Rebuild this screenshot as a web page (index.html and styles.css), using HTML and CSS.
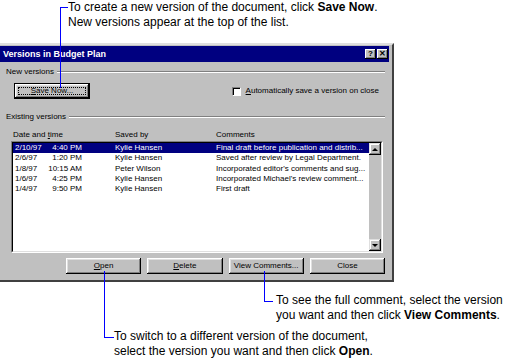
FILE: index.html
```html
<!DOCTYPE html>
<html lang="en">
<head>
    <meta charset="UTF-8">
    <title>Versions in Budget Plan</title>
    <link rel="stylesheet" href="styles.css">
</head>
<body>
    <p class="callout callout-top">To create a new version of the document, click <b>Save Now</b>.<br>New versions appear at the top of the list.</p>

    <div class="dialog">
        <div class="titlebar">
            <span class="title">Versions in Budget Plan</span>
            <span class="tb-buttons">
                <span class="tb-btn">?</span>
                <span class="tb-btn">&#x2715;</span>
            </span>
        </div>

        <div class="dialog-body">
            <div class="group-head"><span>New versions</span><span class="etch"></span></div>
            <div class="new-row">
                <button class="btn btn-default"><span class="focus"><u>S</u>ave Now...</span></button>
                <label class="check"><span class="box"></span><span><u>A</u>utomatically save a version on close</span></label>
            </div>

            <div class="group-head"><span>Existing versions</span><span class="etch"></span></div>
            <div class="col-heads">
                <span>Date and <u>t</u>ime</span>
                <span>Saved by</span>
                <span>Comments</span>
            </div>

            <div class="listbox">
                <div class="listbox-inner">
                    <div class="rows">
                        <div class="row selected"><span>2/10/97</span><span class="time">4:40 PM</span><span></span><span>Kylie Hansen</span><span>Final draft before publication and distrib...</span></div>
                        <div class="row"><span>2/6/97</span><span class="time">1:20 PM</span><span></span><span>Kylie Hansen</span><span>Saved after review by Legal Department.</span></div>
                        <div class="row"><span>1/8/97</span><span class="time">10:15 AM</span><span></span><span>Peter Wilson</span><span>Incorporated editor's comments and sug...</span></div>
                        <div class="row"><span>1/6/97</span><span class="time">4:25 PM</span><span></span><span>Kylie Hansen</span><span>Incorporated Michael's review comment...</span></div>
                        <div class="row"><span>1/4/97</span><span class="time">9:50 PM</span><span></span><span>Kylie Hansen</span><span>First draft</span></div>
                    </div>
                    <div class="scrollbar">
                        <span class="sb-btn"><span class="arrow-up"></span></span>
                        <span class="track"></span>
                        <span class="sb-btn"><span class="arrow-down"></span></span>
                    </div>
                </div>
            </div>

            <div class="actions">
                <button class="btn"><u>O</u>pen</button>
                <button class="btn"><u>D</u>elete</button>
                <button class="btn">View Comments...</button>
                <button class="btn">Close</button>
            </div>
        </div>
    </div>

    <p class="callout callout-comments">To see the full comment, select the version<br>you want and then click <b>View Comments</b>.</p>
    <p class="callout callout-open">To switch to a different version of the document,<br>select the version you want and then click <b>Open</b>.</p>
</body>
</html>
```

FILE: styles.css
```css
body {
    margin: 0;
    background: #fff;
    font-family: 'Liberation Sans', Arial, sans-serif;
    width: 507px;
    height: 359px;
    overflow: hidden;
}

/* callouts */
.callout {
    position: relative;
    margin: 0;
    font-size: 12px;
    line-height: 15px;
    color: #000;
    white-space: nowrap;
}
.callout::before {
    content: '';
    position: absolute;
    z-index: 1;
    border: 0 solid #0000ff;
}
.callout-top {
    padding-left: 68px;
}
.callout-top::before {
    left: 60px;
    top: 7px;
    width: 7px;
    height: 80px;
    border-top-width: 1px;
    border-left-width: 1px;
}
.callout-comments {
    margin-top: 11px;
    padding-left: 276px;
}
.callout-comments::before {
    left: 264px;
    top: -22px;
    width: 8px;
    height: 30px;
    border-left-width: 1px;
    border-bottom-width: 1px;
}
.callout-open {
    margin-top: 6px;
    padding-left: 114px;
}
.callout-open::before {
    left: 104px;
    top: -58px;
    width: 9px;
    height: 66px;
    border-left-width: 1px;
    border-bottom-width: 1px;
}

/* dialog frame */
.dialog {
    box-sizing: border-box;
    width: 397px;
    margin: 13px 0 0 -3px;
    padding: 1px 3px 1px 1px;
    background: #c0c0c0;
    border: 2px solid;
    border-color: #dfdfdf #404040 #404040 #dfdfdf;
    font-size: 8px;
    line-height: 10px;
    color: #000;
}
.titlebar {
    height: 16px;
    background: #000080;
    display: flex;
    align-items: center;
    justify-content: space-between;
    padding: 0 1px 0 3px;
}
.title {
    color: #fff;
    font-weight: bold;
    font-size: 9px;
}
.tb-buttons {
    display: flex;
    gap: 1px;
}
.tb-btn {
    width: 11px;
    height: 10px;
    background: #c0c0c0;
    box-shadow: inset -1px -1px #000, inset 1px 1px #fff, inset -2px -2px #808080;
    font-size: 8px;
    font-weight: bold;
    line-height: 10px;
    text-align: center;
}

.dialog-body {
    padding: 5px 4px 5px 6px;
}
.group-head {
    display: flex;
    align-items: center;
    gap: 3px;
    height: 10px;
}
.etch {
    flex: 1;
    border-top: 1px solid #808080;
    border-bottom: 1px solid #fff;
}
.group-head + .group-head,
.new-row + .group-head {
    margin-top: 13px;
}

.new-row {
    display: flex;
    align-items: center;
    justify-content: space-between;
    margin-top: 6px;
    padding: 0 6px 0 8px;
}
.check {
    display: flex;
    align-items: center;
    gap: 5px;
}
.box {
    width: 7px;
    height: 7px;
    background: #fff;
    border: 1px solid;
    border-color: #808080 #fff #fff #808080;
    box-shadow: inset 1px 1px #000;
}

/* buttons */
.btn {
    width: 76px;
    height: 16px;
    padding: 0;
    font: inherit;
    color: #000;
    background: #c0c0c0;
    border: 0;
    box-shadow: inset -1px -1px #000, inset 1px 1px #fff, inset -2px -2px #808080, inset 2px 2px #dfdfdf;
}
.btn-default {
    border: 1px solid #000;
    height: 16px;
    display: flex;
    padding: 3px;
    box-sizing: border-box;
}
.focus {
    flex: 1;
    border: 1px dotted #000;
    display: flex;
    align-items: center;
    justify-content: center;
    line-height: 8px;
}

/* list */
.col-heads {
    display: grid;
    grid-template-columns: 102px 101px 1fr;
    margin-top: 8px;
    padding-left: 7px;
}
.listbox {
    margin: 1px 0 0 5px;
    width: 372px;
    box-sizing: border-box;
    border: 1px solid;
    border-color: #808080 #fff #fff #808080;
}
.listbox-inner {
    display: flex;
    height: 108px;
    background: #fff;
    border: 1px solid;
    border-color: #000 #dfdfdf #dfdfdf #000;
}
.rows {
    flex: 1;
}
.row {
    display: grid;
    grid-template-columns: 32px 35px 33px 101px 1fr;
    padding-left: 2px;
    height: 10.25px;
    line-height: 10.25px;
    white-space: nowrap;
    overflow: hidden;
}
.row .time {
    text-align: right;
}
.row.selected {
    background: #000080;
    color: #fff;
}
.scrollbar {
    width: 12px;
    display: flex;
    flex-direction: column;
    background: #c0c0c0;
}
.sb-btn {
    height: 12px;
    background: #c0c0c0;
    box-shadow: inset -1px -1px #000, inset 1px 1px #dfdfdf, inset -2px -2px #808080, inset 2px 2px #fff;
    display: flex;
    align-items: center;
    justify-content: center;
}
.track {
    flex: 1;
}
.arrow-up, .arrow-down {
    width: 0;
    height: 0;
    border-left: 3px solid transparent;
    border-right: 3px solid transparent;
}
.arrow-up {
    border-bottom: 3px solid #000;
}
.arrow-down {
    border-top: 3px solid #000;
}

.actions {
    display: flex;
    gap: 6px;
    margin-top: 5px;
    padding-left: 60px;
}
```
